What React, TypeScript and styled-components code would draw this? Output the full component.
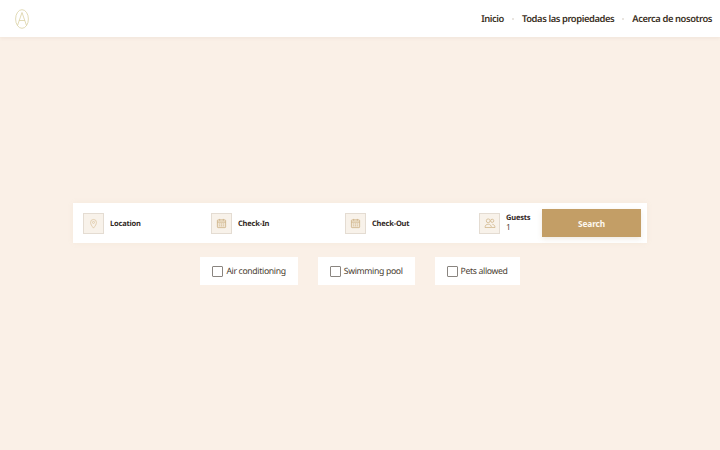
import React from 'react';
import styled, { createGlobalStyle } from 'styled-components';

const GlobalStyle = createGlobalStyle`
  * { box-sizing: border-box; }
  html, body { margin: 0; padding: 0; height: 100%; }
  body {
    background: #faf0e7;
    font-family: 'Noto Sans', 'Open Sans', sans-serif;
    color: #3b3024;
    text-rendering: geometricPrecision;
  }
`;

const Page = styled.div`
  width: 720px;
  height: 450px;
  overflow: hidden;
`;

const Header = styled.header`
  height: 37px;
  padding: 0 8px 0 15px;
  background: #fff;
  display: flex;
  align-items: center;
  justify-content: space-between;
  box-shadow: 0 1px 4px rgba(120, 90, 60, 0.08);
`;

const Nav = styled.nav`
  display: flex;
  align-items: center;
`;

const NavLink = styled.a`
  font-size: 9.4px;
  font-weight: 600;
  letter-spacing: -0.41px;
  line-height: 14px;
  color: #3b3024;
`;

const NavDot = styled.span`
  width: 2px;
  height: 2px;
  margin: 0 8px;
  border-radius: 50%;
  background: #e2dcd6;
`;

const Main = styled.main`
  padding-top: 166px;
  display: flex;
  flex-direction: column;
  align-items: center;
  gap: 14px;
`;

const SearchBar = styled.div`
  width: 574px;
  height: 40px;
  padding: 0 6px 0 10px;
  background: #fff;
  display: grid;
  grid-template-columns: 128px 134px 134px 63px 99px;
  align-items: center;
  box-shadow: 0 0 6px rgba(190, 160, 120, 0.08);
`;

const Field = styled.div`
  display: flex;
  align-items: center;
  gap: 6px;
`;

const IconBox = styled.span`
  width: 21px;
  height: 21px;
  display: flex;
  align-items: center;
  justify-content: center;
  background: #f8f2ea;
  border: 1px solid #e4dcd2;
`;

const FieldLabel = styled.span`
  display: block;
  font-size: 7.5px;
  font-weight: 700;
  letter-spacing: -0.2px;
  line-height: 10px;
  color: #33291f;
`;

const SoloLabel = styled(FieldLabel)`
  padding-top: 2px;
`;

const FieldValue = styled.span`
  display: block;
  font-size: 8.5px;
  line-height: 10px;
  color: #5a4c3d;
`;

const SearchButton = styled.button`
  width: 99px;
  height: 28px;
  padding: 0;
  border: 0;
  background: #c39e66;
  color: #fdf8f0;
  font-family: inherit;
  font-size: 8.3px;
  font-weight: 700;
  letter-spacing: -0.15px;
  box-shadow: 0 2px 5px rgba(150, 115, 65, 0.15);
`;

const Filters = styled.div`
  display: flex;
  gap: 20px;
`;

const FilterCard = styled.label`
  height: 28px;
  padding: 0 12px;
  background: #fff;
  display: flex;
  align-items: center;
  gap: 3px;
  font-size: 8.7px;
  letter-spacing: -0.35px;
  line-height: 12px;
  color: #4a3e31;
`;

const Box = styled.span`
  width: 11px;
  height: 11px;
  border: 1px solid #8a8580;
  border-radius: 1px;
`;

const Logo = () => (
  <svg width="14" height="20" viewBox="0 0 14 20" fill="none" stroke="#d6cb98" strokeWidth="0.7">
    <ellipse cx="7" cy="10" rx="6.400" ry="9.300" />
    <path d="M2.500 16.500 7 3.500l4.500 13M4.200 11.500h5.600" />
  </svg>
);

const PinIcon = () => (
  <svg width="11" height="11" viewBox="0 0 12 12" fill="none" stroke="#dcc39c" strokeWidth="0.8">
    <path d="M6 11C4 8.500 2.800 6.800 2.800 4.800a3.200 3.200 0 0 1 6.400 0C9.200 6.800 8 8.500 6 11Z" />
    <circle cx="6" cy="4.800" r="1.100" />
  </svg>
);

const CalendarIcon = () => (
  <svg width="11" height="11" viewBox="0 0 12 12" fill="#f1e6d4" stroke="#c9ad80" strokeWidth="0.8">
    <rect x="1.500" y="2" width="9" height="8.500" rx="0.800" />
    <path d="M1.500 4.500h9M4 1v2M8 1v2M3.500 6.500h1M5.500 6.500h1M7.500 6.500h1M3.500 8.500h1M5.500 8.500h1M7.500 8.500h1" />
  </svg>
);

const GuestsIcon = () => (
  <svg width="12" height="12" viewBox="0 0 12 12" fill="none" stroke="#d2b88d" strokeWidth="0.8">
    <circle cx="4.200" cy="3.800" r="1.900" />
    <circle cx="8.200" cy="3.800" r="1.600" />
    <path d="M1 10.500c0-2 1.300-3.300 3.200-3.300s3.200 1.300 3.200 3.300Z" />
    <path d="M8.300 7.300c1.500.1 2.700 1.300 2.700 3.200H7.500" />
  </svg>
);

const filters = ['Air conditioning', 'Swimming pool', 'Pets allowed'];

export default function App() {
  return (
    <Page>
      <GlobalStyle />
      <Header>
        <Logo />
        <Nav>
          <NavLink>Inicio</NavLink>
          <NavDot />
          <NavLink>Todas las propiedades</NavLink>
          <NavDot />
          <NavLink>Acerca de nosotros</NavLink>
        </Nav>
      </Header>
      <Main>
        <SearchBar>
          <Field>
            <IconBox><PinIcon /></IconBox>
            <SoloLabel>Location</SoloLabel>
          </Field>
          <Field>
            <IconBox><CalendarIcon /></IconBox>
            <SoloLabel>Check-In</SoloLabel>
          </Field>
          <Field>
            <IconBox><CalendarIcon /></IconBox>
            <SoloLabel>Check-Out</SoloLabel>
          </Field>
          <Field>
            <IconBox><GuestsIcon /></IconBox>
            <div>
              <FieldLabel>Guests</FieldLabel>
              <FieldValue>1</FieldValue>
            </div>
          </Field>
          <SearchButton>Search</SearchButton>
        </SearchBar>
        <Filters>
          {filters.map((name) => (
            <FilterCard key={name}>
              <Box />
              {name}
            </FilterCard>
          ))}
        </Filters>
      </Main>
    </Page>
  );
}
